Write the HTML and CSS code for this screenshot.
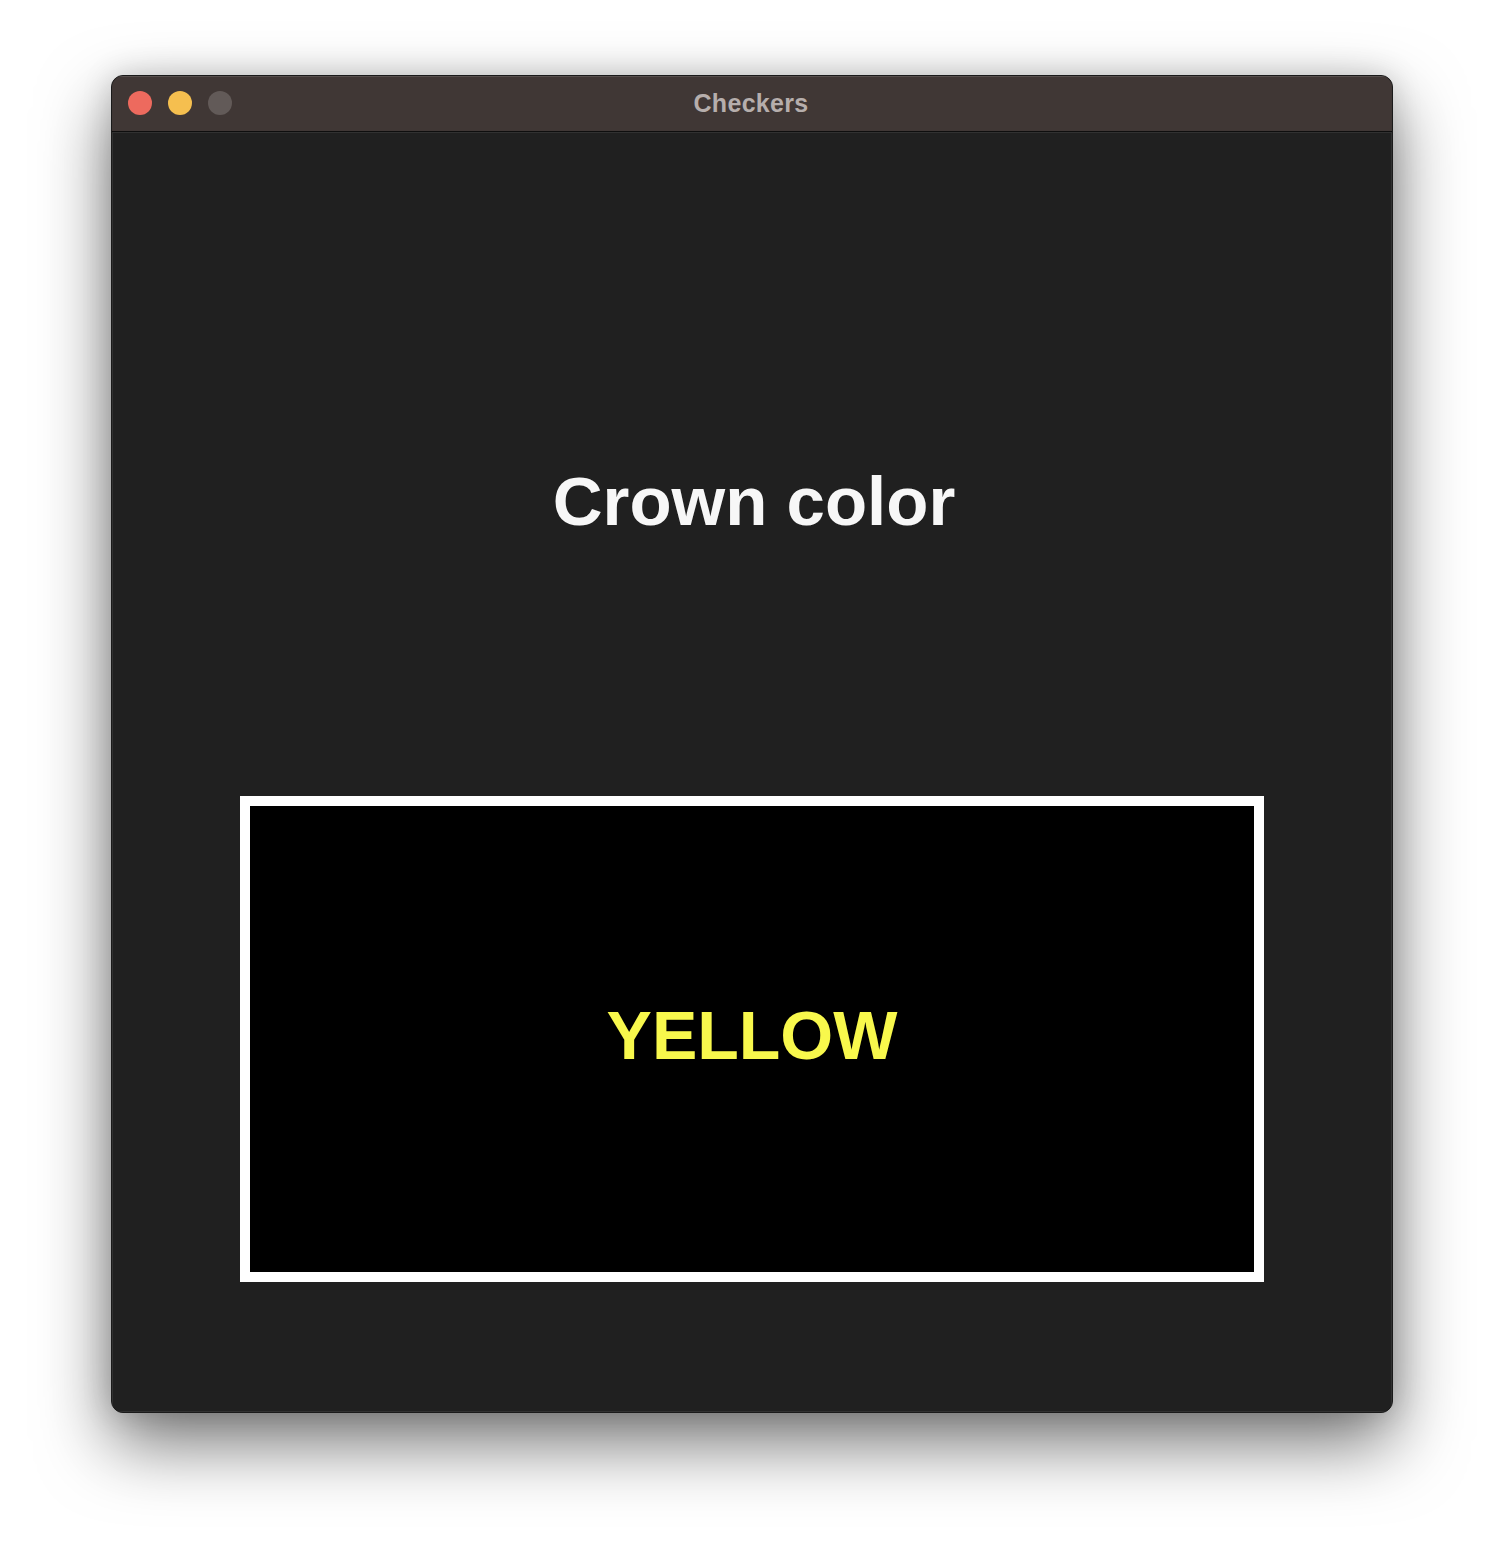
FILE: index.html
```html
<!DOCTYPE html>
<html>
<head>
<meta charset="utf-8">
<link rel="stylesheet" href="styles.css">
</head>
<body>
<div class="window">
  <div class="titlebar">
    <div class="lights">
      <span class="light red"></span>
      <span class="light yellow"></span>
      <span class="light gray"></span>
    </div>
    <div class="title">Checkers</div>
  </div>
  <div class="content">
    <div class="heading">Crown color</div>
    <div class="choice"><span class="choice-text">YELLOW</span></div>
  </div>
</div>
</body>
</html>
```
FILE: styles.css
```css
html, body {
  margin: 0;
  padding: 0;
  background: #ffffff;
}
body {
  padding-top: 75px;
  min-height: 1560px;
  box-sizing: border-box;
  font-family: "Liberation Sans", Arial, sans-serif;
}
.window {
  width: 1280px;
  margin: 0 auto;
  border: 1px solid #1a1a1a;
  border-radius: 12px;
  overflow: hidden;
  background: #202020;
  box-shadow: 0 30px 70px rgba(0, 0, 0, 0.55), 0 0 30px rgba(0, 0, 0, 0.15);
  position: relative;
}
.titlebar {
  height: 55px;
  background: #403735;
  border-bottom: 1px solid #0e0e0e;
  box-shadow: inset 0 1px 0 rgba(255, 255, 255, 0.12);
  position: relative;
  display: flex;
  align-items: center;
  justify-content: center;
}
.lights {
  position: absolute;
  left: 16px;
  top: 15px;
  display: flex;
  gap: 16px;
}
.light {
  width: 24px;
  height: 24px;
  border-radius: 50%;
  display: block;
}
.red { background: #ed6a5e; }
.yellow { background: #f5bf4f; }
.gray { background: #625a58; }
.title {
  color: #b6aeac;
  font-weight: bold;
  font-size: 25px;
  letter-spacing: 0.3px;
  margin-left: -2px;
  margin-top: 0;
}
.content {
  height: 1280px;
  display: flex;
  flex-direction: column;
  align-items: center;
  box-shadow: inset 0 0 0 1px rgba(255, 255, 255, 0.08);
}
.heading {
  margin-top: 330px;
  height: 80px;
  line-height: 80px;
  font-size: 69px;
  font-weight: bold;
  color: #f7f7f7;
  letter-spacing: 0;
  margin-left: 4px;
}
.choice {
  margin-top: 254px;
  width: 1024px;
  height: 486px;
  box-sizing: border-box;
  border: 10px solid #ffffff;
  background: #000000;
  display: flex;
  align-items: center;
  justify-content: center;
  padding-bottom: 8px;
}
.choice-text {
  color: #f8f84c;
  font-size: 68px;
  font-weight: bold;
  line-height: 80px;
}
```
